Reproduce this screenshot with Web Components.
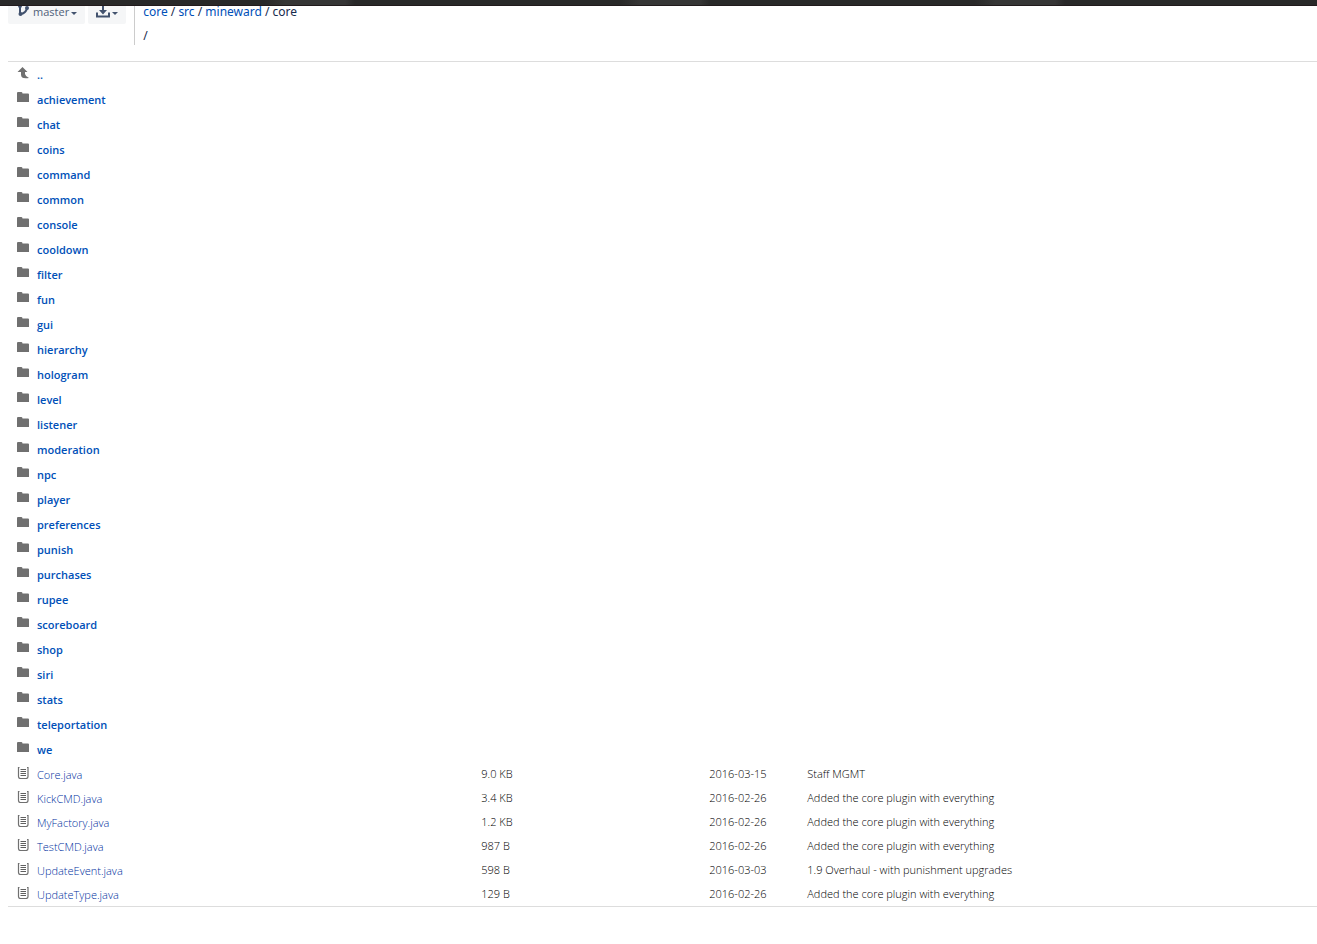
<!DOCTYPE html>
<html lang="en">
<head>
<meta charset="utf-8">
<title>mineward / core</title>
<style>
body { margin: 0; background: #fff; color: #000; font: 300 11px/16px "Open Sans", "Noto Sans", sans-serif; }
</style>
</head>
<body>
<source-page></source-page>
<script>
const ICONS = {
  folder: '<svg width="12" height="10" viewBox="0 0 12 10"><path fill="#707070" d="M0 1Q0 0 1 0H4.500Q5.500 0 5.500 1.500H11Q12 1.500 12 2.500V10H0Z"/></svg>',
  file: '<svg width="12" height="12" viewBox="0 0 12 12"><path fill="none" stroke="#707070" stroke-width="1.200" d="M2.500 .5H1.500V9.500Q1.500 11.500 3.500 11.500H9Q11 11.500 11 9.500V.5H10"/><path fill="none" stroke="#606060" d="M3.500 2.500H9M3.500 4.500H9M3.500 6.500H9M3.500 8.500H9"/></svg>',
  up: '<svg width="12" height="12" viewBox="0 0 12 12"><path fill="#707070" d="M5.500 0L10.500 5H8V7Q8.500 9.500 12 11Q4 12.500 4 7.500V5H.5Z"/></svg>',
  branch: '<svg width="14" height="14" viewBox="0 0 14 14"><path fill="none" stroke="#42526e" stroke-width="2" d="M4 0V9M5 9Q10 8 11 3"/><circle cx="4" cy="1" r="2" fill="#42526e"/><circle cx="11" cy="3" r="2" fill="#42526e"/><circle cx="4.500" cy="9" r="2" fill="#42526e"/></svg>',
  download: '<svg width="14" height="14" viewBox="0 0 14 14"><path fill="none" stroke="#42526e" stroke-width="2" d="M1 7.500V11.500H13V7.500"/><path fill="#42526e" d="M6 0H8V5H11L7 9.500L3 5H6Z"/></svg>',
  caret: '<svg width="6" height="3" viewBox="0 0 6 3"><path fill="#42526e" d="M0 0H6L3 3Z"/></svg>'
};

customElements.define('ui-icon', class extends HTMLElement {
  connectedCallback() {
    this.attachShadow({ mode: 'open' }).innerHTML =
      `<style>:host{display:inline-flex}svg{display:block}</style>${ICONS[this.getAttribute('name')]}`;
  }
});

customElements.define('menu-button', class extends HTMLElement {
  connectedCallback() {
    this.attachShadow({ mode: 'open' }).innerHTML = `
      <style>
        :host { display: block; }
        button { display: flex; align-items: center; height: 24px; padding: 0 8px; border: 0;
          border-radius: 0 0 2px 2px; background: #f5f6f7; color: #505f79; font: inherit; }
        .caret { padding: 2px 0 0 2px; }
      </style>
      <button type="button" aria-haspopup="true" aria-label="${this.getAttribute('label')}"><slot></slot><ui-icon class="caret" name="caret"></ui-icon></button>`;
  }
});

customElements.define('path-trail', class extends HTMLElement {
  connectedCallback() {
    this.attachShadow({ mode: 'open' }).innerHTML = `
      <style>
        :host { display: block; }
        nav { box-sizing: border-box; width: 170px; height: 45px; padding-left: 8px; border-left: 1px solid #ccc;
          font: 400 12px/24px "Noto Sans", "Open Sans", sans-serif; color: #172b4d; }
        a { color: #0050b8; text-decoration: none; }
      </style>
      <nav aria-label="Path"><a href="#core">core</a> / <a href="#src">src</a> / <a href="#mineward">mineward</a> / core <span>/</span></nav>`;
  }
});

const FOLDERS = ['achievement', 'chat', 'coins', 'command', 'common', 'console', 'cooldown', 'filter', 'fun', 'gui',
  'hierarchy', 'hologram', 'level', 'listener', 'moderation', 'npc', 'player', 'preferences', 'punish', 'purchases',
  'rupee', 'scoreboard', 'shop', 'siri', 'stats', 'teleportation', 'we'];
const ADDED = 'Added the core plugin with everything';
const FILES = [
  ['Core.java', '9.0 KB', '2016-03-15', 'Staff MGMT'],
  ['KickCMD.java', '3.4 KB', '2016-02-26', ADDED],
  ['MyFactory.java', '1.2 KB', '2016-02-26', ADDED],
  ['TestCMD.java', '987 B', '2016-02-26', ADDED],
  ['UpdateEvent.java', '598 B', '2016-03-03', '1.9 Overhaul - with punishment upgrades'],
  ['UpdateType.java', '129 B', '2016-02-26', ADDED]
];

customElements.define('file-list', class extends HTMLElement {
  connectedCallback() {
    const folder = (name, icon) =>
      `<tr class="folder"><td colspan="4"><a href="#${name}"><ui-icon name="${icon}"></ui-icon><span>${name}</span></a></td></tr>`;
    const file = ([name, size, date, message]) =>
      `<tr><td><a href="#${name}"><ui-icon name="file"></ui-icon><span>${name}</span></a></td><td>${size}</td><td>${date}</td><td>${message}</td></tr>`;
    this.attachShadow({ mode: 'open' }).innerHTML = `
      <style>
        :host { display: block; }
        table { width: 100%; table-layout: fixed; border-collapse: separate; border-spacing: 0;
          border: solid #ddd; border-width: 1px 0; }
        .name { width: 36%; } .size { width: 228px; } .date { width: 98px; }
        td { height: 24px; padding: 0 0 0 2px; line-height: 24px; white-space: nowrap; vertical-align: top; }
        td:first-child { padding: 0 0 0 9px; }
        .folder td { height: 25px; }
        a { display: flex; align-items: flex-start; gap: 8px; height: 24px; color: #0030a0; text-decoration: none; }
        ui-icon { padding-top: 5px; }
        span { line-height: 26px; }
        .folder a { color: #0050b8; }
        .folder span { font-weight: 600; }
      </style>
      <table aria-label="Files">
        <colgroup><col class="name"><col class="size"><col class="date"><col></colgroup>
        <tbody>${folder('..', 'up')}${FOLDERS.map(n => folder(n, 'folder')).join('')}${FILES.map(file).join('')}</tbody>
      </table>`;
  }
});

customElements.define('source-page', class extends HTMLElement {
  connectedCallback() {
    this.attachShadow({ mode: 'open' }).innerHTML = `
      <style>
        :host { display: block; }
        header { position: sticky; top: 0; z-index: 1; height: 6px; box-sizing: border-box; border-bottom: 1px solid #211a1c;
          background: repeating-linear-gradient(90deg, #292929 0 265px, #363636 285px 345px, #292929 355px); }
        .toolbar { display: flex; gap: 3px; margin-top: -6px; padding-left: 8px; }
        .branch { padding-left: 3px; font-weight: 400; }
        path-trail { margin-left: 5px; }
        file-list { margin: 16px 0 0 8px; }
      </style>
      <header></header>
      <main>
        <div class="toolbar">
          <menu-button label="Branch: master"><ui-icon name="branch"></ui-icon><span class="branch">master</span></menu-button>
          <menu-button label="Download"><ui-icon name="download"></ui-icon></menu-button>
          <path-trail></path-trail>
        </div>
        <file-list></file-list>
      </main>`;
  }
});
</script>
</body>
</html>
